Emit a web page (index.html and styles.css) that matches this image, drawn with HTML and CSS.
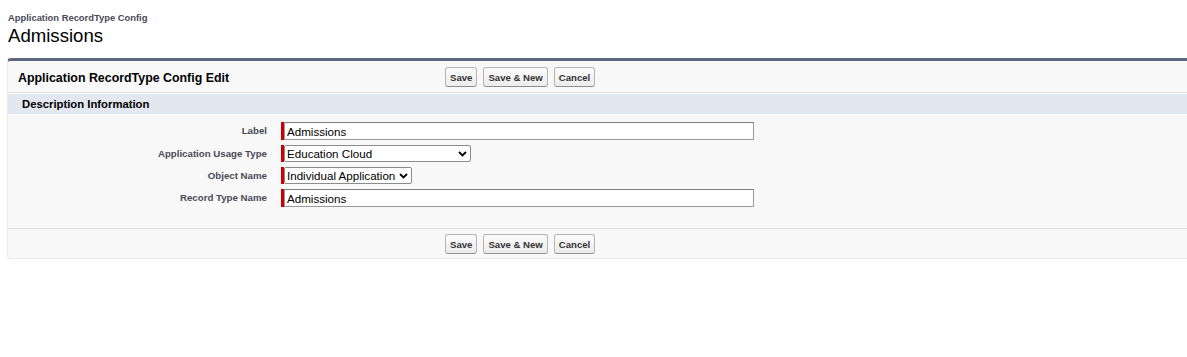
FILE: index.html
```html
<!DOCTYPE html>
<html lang="en">
<head>
    <meta charset="UTF-8">
    <title>Admissions</title>
    <link rel="stylesheet" href="styles.css">
</head>
<body>
    <div id="page">
        <div class="page-head">
            <h2 class="page-type">Application RecordType Config</h2>
            <h1 class="page-name">Admissions</h1>
        </div>
        <form action="#" class="block">
            <div class="block-head">
                <h2 class="block-title">Application RecordType Config Edit</h2>
                <div class="btns">
                    <button type="button" class="btn">Save</button>
                    <button type="button" class="btn">Save &amp; New</button>
                    <button type="button" class="btn">Cancel</button>
                </div>
            </div>
            <h3 class="sub-head">Description Information</h3>
            <ul class="fields">
                <li>
                    <label for="rt-label" class="field">Label</label>
                    <span class="req"><input type="text" id="rt-label" class="wide" value="Admissions"></span>
                </li>
                <li>
                    <label for="rt-usage" class="field">Application Usage Type</label>
                    <span class="req">
                        <span class="pick">
                            <select id="rt-usage" class="usage">
                                <option>Education Cloud</option>
                            </select>
                            <svg class="chev" width="9" height="6" viewBox="0 0 9 6"><path d="M1 1l3.5 3.5L8 1" fill="none" stroke="#000" stroke-width="1.8"/></svg>
                        </span>
                    </span>
                </li>
                <li>
                    <label for="rt-object" class="field">Object Name</label>
                    <span class="req">
                        <span class="pick">
                            <select id="rt-object" class="object">
                                <option>Individual Application</option>
                            </select>
                            <svg class="chev" width="9" height="6" viewBox="0 0 9 6"><path d="M1 1l3.5 3.5L8 1" fill="none" stroke="#000" stroke-width="1.8"/></svg>
                        </span>
                    </span>
                </li>
                <li>
                    <label for="rt-name" class="field">Record Type Name</label>
                    <span class="req"><input type="text" id="rt-name" class="wide" value="Admissions"></span>
                </li>
            </ul>
            <div class="block-foot">
                <div class="btns">
                    <button type="button" class="btn">Save</button>
                    <button type="button" class="btn">Save &amp; New</button>
                    <button type="button" class="btn">Cancel</button>
                </div>
            </div>
        </form>
    </div>
</body>
</html>
```

FILE: styles.css
```css
body{
    margin: 0;
    font-family: "Liberation Sans", Arial, sans-serif;
    color: #000;
    background: #fff;
}
#page{
    padding: 12px 0 0 7px;
}
.page-head{
    padding-left: 1px;
    height: 46px;
}
.page-type{
    margin: 0;
    font-size: 9.4px; font-weight: bold; color: #4a4a56;
    line-height: 12px;
}
.page-name{
    margin: 0;
    font-size: 18.6px; font-weight: normal;
    line-height: 23px;
}
.block{
    background: #f8f8f8;
    border: 1px solid #eaeaea; border-right: none;
    border-top: 3px solid #5d6683;
    border-radius: 4px 0 0 4px;
}
.block-head{
    display: flex; align-items: center;
    height: 31px;
    border-bottom: 1px solid #e2e2e2;
}
.block-title{
    margin: 0; width: 427px; padding-left: 10px; padding-top: 2px;
    font-size: 12.4px; font-weight: bold;
}
.btns{
    display: flex; gap: 6px;
    padding-top: 1px;
}
.btn{
    font-family: "Liberation Sans", Arial, sans-serif;
    font-size: 9.6px; font-weight: bold; color: #333;
    height: 20px; padding: 0 4px;
    background: linear-gradient(#fbfbfb, #ececec);
    border: 1px solid #b5b5b5; border-bottom-color: #8f8f8f;
    border-radius: 3px;
}
.sub-head{
    margin: 0;
    border-top: 1px solid #fff;
    background: #e3e7ef;
    height: 20px; line-height: 20px;
    padding-left: 14px;
    font-size: 11.3px; font-weight: bold;
}
.fields{
    list-style: none;
    margin: 0; padding: 8px 0 17px;
}
.fields li{
    display: flex; align-items: flex-start;
    height: 22px;
}
.fields li:first-child{
    height: 23px;
}
.field{
    width: 259px; text-align: right;
    padding-right: 14px; padding-top: 2px;
    font-size: 9.7px; font-weight: bold; color: #4a4a56;
    line-height: 13px;
}
.req{
    display: flex;
    border-left: 3px solid #c00;
}
input.wide{
    width: 470px; height: 18px; box-sizing: border-box;
    border: 1px solid #999; border-top-color: #7c7c7c;
    padding: 0 2px; margin: 0;
    font-family: "Liberation Sans", Arial, sans-serif; font-size: 11.6px;
    background: #fff;
}
.pick{
    position: relative; display: flex;
}
select{
    appearance: none;
    height: 17px; box-sizing: border-box;
    border: 1px solid #8c8c8c; border-radius: 2px;
    padding: 0 2px; margin: 0;
    font-family: "Liberation Sans", Arial, sans-serif; font-size: 11.6px;
    background: #fff; color: #000;
}
select.usage{ width: 187px; }
select.object{ width: 128px; }
.chev{
    position: absolute; right: 4px; top: 6px;
    pointer-events: none;
}
.block-foot{
    display: flex; align-items: center;
    height: 29px;
    border-top: 1px solid #e2e2e2;
    padding-left: 437px;
}
```
